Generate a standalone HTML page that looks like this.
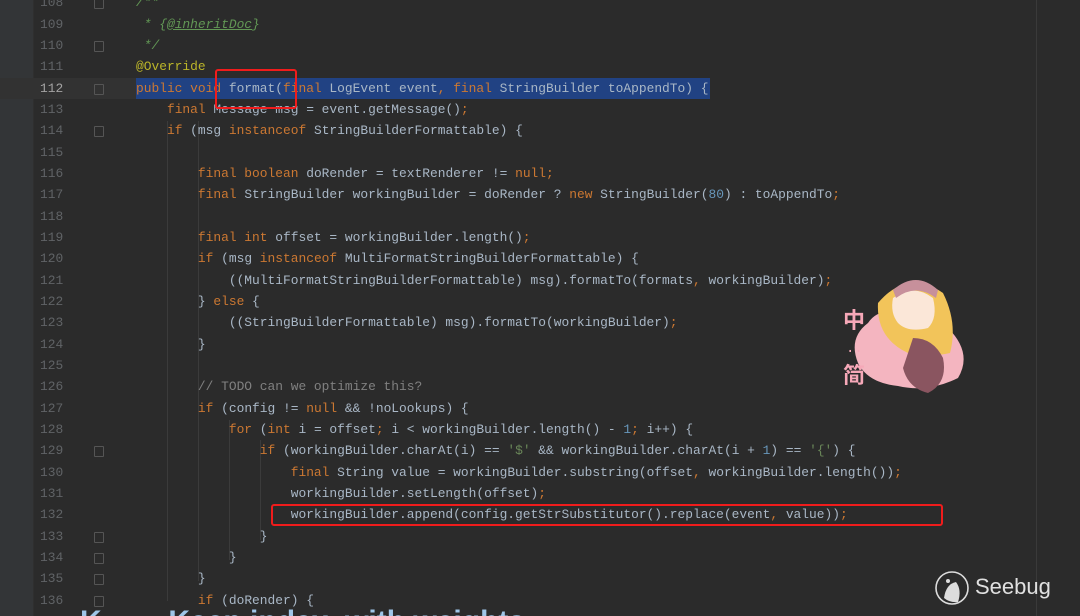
<!DOCTYPE html>
<html style="overflow:hidden;width:1080px;height:616px"><head><meta charset="utf-8"><style>
*{margin:0;padding:0}
body{width:1080px;height:616px;overflow:hidden;background:#2b2b2b;position:relative;font-family:"Liberation Mono","DejaVu Sans Mono",monospace;font-size:12.9px}
#side{position:absolute;left:0;top:0;width:33px;height:616px;background:#333537;border-right:1px solid #2f2f2f}
.ln{position:absolute;left:40px;width:22px;text-align:right;color:#606366;line-height:21.33px;height:21.33px}
.c{position:absolute;left:136px;white-space:pre;color:#a9b7c6;line-height:21.33px;height:21.33px}
.k{color:#cc7832}.n{color:#6897bb}.g{color:#808080}.d{color:#629755;font-style:italic}.s{color:#6a8759}.a{color:#bbb529}
.sel{position:absolute;left:136px;top:78px;width:574px;height:21px;background:#214283}
.cur{position:absolute;left:0;top:78px;width:136px;height:21px;background:#323232}
.box{position:absolute;border:2px solid #f01c1c;border-radius:3px}
.guide{position:absolute;width:1px;background:#3b3b3b}
.fold{position:absolute;left:94px;width:8px;height:9px;border:1px solid #555;border-radius:1px}
</style></head><body>
<div id="side"></div>
<div class="cur"></div>
<div class="sel"></div>
<div style="position:absolute;left:1036px;top:0;width:1px;height:616px;background:#3a3a3a"></div>
<div class="guide" style="left:167px;top:121px;height:480px"></div>
<div class="guide" style="left:198px;top:121px;height:460px"></div>
<div class="guide" style="left:229px;top:420px;height:140px"></div>
<div class="guide" style="left:260px;top:440px;height:100px"></div>
<div id="g"></div>
<div class="box" style="left:215px;top:69px;width:78px;height:36px"></div>
<div class="box" style="left:271px;top:504px;width:668px;height:18px"></div>

<svg style="position:absolute;left:838px;top:268px" width="135" height="130" viewBox="0 0 135 130">
<path d="M20 95 Q10 70 30 55 Q40 40 60 45 Q90 40 110 60 Q135 85 120 110 Q90 125 60 118 Q30 115 20 95Z" fill="#f4b5c0"/>
<path d="M40 35 Q70 0 105 25 Q120 55 112 85 Q90 90 70 85 Q38 70 40 35Z" fill="#f2c45a"/>
<path d="M55 30 Q75 15 95 30 Q100 50 90 60 Q70 65 60 55 Q52 45 55 30Z" fill="#fbe7d8"/>
<path d="M55 22 Q78 2 100 22 L98 30 Q78 15 58 30Z" fill="#c7909b"/>
<path d="M75 70 Q95 70 105 90 Q110 115 90 125 Q70 120 65 100Z" fill="#8a5560"/>
<text x="5" y="60" font-family="Noto Sans CJK SC,sans-serif" font-size="22" fill="#f6a8b8" font-weight="bold">中</text>
<text x="8" y="84" font-size="14" fill="#f6a8b8">..</text>
<text x="5" y="115" font-family="Noto Sans CJK SC,sans-serif" font-size="22" fill="#f6a8b8" font-weight="bold">简</text>
</svg>

<svg style="position:absolute;left:932px;top:568px" width="40" height="40" viewBox="0 0 40 40">
<circle cx="20" cy="20" r="16" fill="none" stroke="#ddd" stroke-width="1.6"/>
<path d="M12 30 Q14 16 24 14 Q30 22 26 34 Q18 35 12 30Z" fill="#ddd"/>
<circle cx="16" cy="13" r="2" fill="#ddd"/>
</svg>
<div style="position:absolute;left:975px;top:574px;font-family:'Liberation Sans',sans-serif;font-size:22px;color:#e0e0e0">Seebug</div>
<div style="position:absolute;left:80px;top:604px;font-family:'Liberation Sans',sans-serif;font-size:30px;line-height:36px;color:#9fc6e8;white-space:pre;font-weight:bold">K        Keep index, with weights</div>

<script>
var L=[
'<span class="d">/**</span>',
'<span class="d"> * {<u>@inheritDoc</u>}</span>',
'<span class="d"> */</span>',
'<span class="a">@Override</span>',
'<span class="k">public void</span> format(<span class="k">final</span> LogEvent event<span class="k">, final</span> StringBuilder toAppendTo) {',
'    <span class="k">final</span> Message msg = event.getMessage()<span class="k">;</span>',
'    <span class="k">if</span> (msg <span class="k">instanceof</span> StringBuilderFormattable) {',
'',
'        <span class="k">final boolean</span> doRender = textRenderer != <span class="k">null;</span>',
'        <span class="k">final</span> StringBuilder workingBuilder = doRender ? <span class="k">new</span> StringBuilder(<span class="n">80</span>) : toAppendTo<span class="k">;</span>',
'',
'        <span class="k">final int</span> offset = workingBuilder.length()<span class="k">;</span>',
'        <span class="k">if</span> (msg <span class="k">instanceof</span> MultiFormatStringBuilderFormattable) {',
'            ((MultiFormatStringBuilderFormattable) msg).formatTo(formats<span class="k">,</span> workingBuilder)<span class="k">;</span>',
'        } <span class="k">else</span> {',
'            ((StringBuilderFormattable) msg).formatTo(workingBuilder)<span class="k">;</span>',
'        }',
'',
'        <span class="g">// TODO can we optimize this?</span>',
'        <span class="k">if</span> (config != <span class="k">null</span> &amp;&amp; !noLookups) {',
'            <span class="k">for</span> (<span class="k">int</span> i = offset<span class="k">;</span> i &lt; workingBuilder.length() - <span class="n">1</span><span class="k">;</span> i++) {',
'                <span class="k">if</span> (workingBuilder.charAt(i) == <span class="s">\'$\'</span> &amp;&amp; workingBuilder.charAt(i + <span class="n">1</span>) == <span class="s">\'{\'</span>) {',
'                    <span class="k">final</span> String value = workingBuilder.substring(offset<span class="k">,</span> workingBuilder.length())<span class="k">;</span>',
'                    workingBuilder.setLength(offset)<span class="k">;</span>',
'                    workingBuilder.append(config.getStrSubstitutor().replace(event<span class="k">,</span> value))<span class="k">;</span>',
'                }',
'            }',
'        }',
'        <span class="k">if</span> (doRender) {'];
var h='';
var folds=[108,110,112,114,129,133,134,135,136];
for(var i=0;i<L.length;i++){var t=(3+21.33*i-10.66).toFixed(1);var n=108+i;
h+='<div class="ln" style="top:'+t+'px'+(n==112?';color:#a4a3a3':'')+'">'+n+'</div><div class="c" style="top:'+t+'px">'+L[i]+'</div>';
if(folds.indexOf(n)>=0)h+='<div class="fold" style="top:'+(+t+6)+'px"></div>';}
document.getElementById('g').outerHTML=h;
</script>
</body></html>
